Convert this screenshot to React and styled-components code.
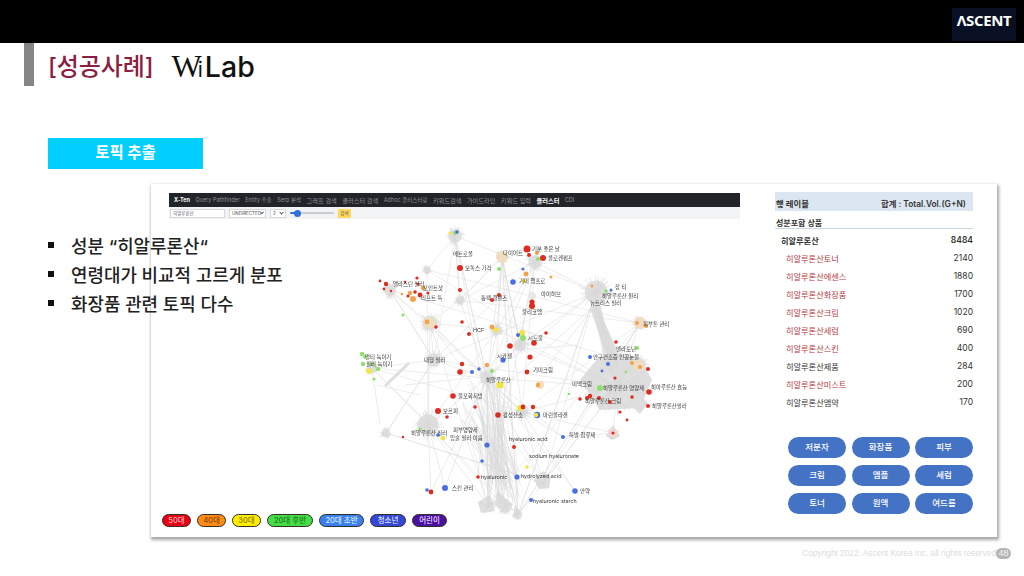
import React from 'react';
import styled, { createGlobalStyle } from 'styled-components';

const GlobalStyle = createGlobalStyle`
  html, body { margin: 0; padding: 0; background: #fff; }
  body { font-family: "Inter", "Noto Sans CJK KR", sans-serif; }
`;

const KR = `"Inter", "Noto Sans CJK KR", sans-serif`;

const Page = styled.div`
  position: relative;
  width: 1024px;
  height: 576px;
  overflow: hidden;
  background: #fff;
`;

const TopBar = styled.header`
  height: 43px;
  background: #000;
  display: flex;
  justify-content: flex-end;
  padding: 8px 8px 2px 0;
  box-sizing: border-box;
`;

const Logo = styled.div`
  width: 64px;
  background: #0a1024;
  color: #fff;
  font: 700 15px "Open Sans", "Liberation Sans", sans-serif;
  letter-spacing: -0.4px;
  display: flex;
  align-items: center;
  justify-content: center;
  padding-bottom: 9px;
  box-sizing: border-box;
`;

const TitleRow = styled.div`
  height: 43px;
  display: flex;
  padding-left: 24px;
`;

const TitleMark = styled.div`
  width: 10px;
  background: #858585;
`;

const Title = styled.h1`
  margin: 0 0 0 14px;
  font: 500 24px/47px ${KR};
  color: #8b1e41;
  letter-spacing: -0.1px;
  height: 46px;
`;

const WiLab = styled.div`
  margin-left: 18px;
  padding-top: 5px;
  display: flex;
  align-items: baseline;
  color: #111;
  height: 38px;
`;

const WiMark = styled.span`
  font: 400 32px "Liberation Serif", serif;
  letter-spacing: -4px;
`;

const WiDot = styled.span`
  font: 400 21px "Inter", sans-serif;
  margin-right: 2px;
`;

const LabText = styled.span`
  font: 500 28.5px "Inter", sans-serif;
  letter-spacing: 0.1px;
`;

const Badge = styled.div`
  margin: 52px 0 0 48px;
  width: 155px;
  height: 31px;
  background: #00cfff;
  color: #fff;
  font: 700 15.5px/30px ${KR};
  text-align: center;
`;

const Panel = styled.section`
  margin: 15px 0 0 151px;
  width: 846px;
  height: 353px;
  background: #fff;
  display: flex;
  box-shadow: 1px 2px 3px 1px rgba(0, 0, 0, 0.35);
`;

const LeftCol = styled.div`
  width: 609px;
  padding: 9px 0 10px 18px;
  box-sizing: border-box;
  display: flex;
  flex-direction: column;
`;

const Nav = styled.nav`
  width: 571px;
  height: 14px;
  background: #212529;
  display: flex;
  align-items: center;
  gap: 5.5px;
  padding-left: 5px;
  box-sizing: border-box;
  white-space: nowrap;
`;

const NavItem = styled.span`
  color: ${p => (p.$on ? '#fff' : '#8d9094')};
  font: ${p => (p.$on ? 700 : 400)} ${p => (p.$wide ? 6.2 : 5.5)}px ${KR};
`;

const FormRow = styled.div`
  width: 571px;
  height: 12px;
  background: #f1f3f5;
  display: flex;
  align-items: center;
  gap: 4px;
  padding-left: 1px;
  box-sizing: border-box;
  font: 400 4.5px ${KR};
  color: #555;
`;

const Field = styled.div`
  width: ${p => p.$w}px;
  height: 9px;
  background: #fff;
  border: 0.5px solid #d5d8dc;
  box-sizing: border-box;
  padding: 0 2px;
  display: flex;
  align-items: center;
  justify-content: space-between;
  white-space: nowrap;
  &::after {
    content: ${p => (p.$select ? "''" : 'none')};
    width: 2px;
    height: 2px;
    border-right: 0.5px solid #555;
    border-bottom: 0.5px solid #555;
    transform: rotate(45deg);
    margin-bottom: 1px;
  }
`;

const Range = styled.input`
  appearance: none;
  width: 44px;
  height: 8px;
  margin: 0;
  background: transparent;
  &::-webkit-slider-runnable-track {
    height: 2px;
    border-radius: 1px;
    background: linear-gradient(to right, #2f6fe0 18%, #c9ccd0 18%);
  }
  &::-webkit-slider-thumb {
    appearance: none;
    width: 7px;
    height: 7px;
    margin-top: -2.5px;
    border-radius: 50%;
    background: #2f6fe0;
  }
`;

const GoButton = styled.div`
  width: 13px;
  height: 9px;
  line-height: 9px;
  background: #ffd95c;
  text-align: center;
  font-size: 4.5px;
`;

const GraphSvg = styled.svg`
  display: block;
  width: 591px;
  height: 295px;
  margin-left: -18px;
  flex: none;
  overflow: visible;
  filter: blur(0.3px);
`;

const NodeLabel = styled.text`
  font: 400 5.4px ${KR};
  fill: #3a3a3a;
`;

const Legend = styled.div`
  display: flex;
  gap: 6px;
  margin: 0 0 0 -7px;
  height: 13px;
  position: relative;
`;

const Pill = styled.div`
  width: ${p => p.$w}px;
  height: 13px;
  border-radius: 7px;
  background: ${p => p.$bg};
  color: ${p => p.$fg};
  border: 1px solid #33302a;
  box-sizing: border-box;
  text-align: center;
  font: 500 7.5px/11px ${KR};
  white-space: nowrap;
`;

const RightCol = styled.aside`
  width: 198px;
  margin-left: 15px;
  padding-top: 8px;
`;

const TableHead = styled.div`
  height: 18px;
  background: #dce6f1;
  display: flex;
  justify-content: space-between;
  align-items: flex-end;
  padding: 0 7px 1px 1px;
  font: 600 8.4px/12px ${KR};
  color: #333;
`;

const SubHead = styled.div`
  height: 17px;
  border-bottom: 1px solid #c9d6e6;
  font: 600 8px/24px ${KR};
  color: #333;
  padding-left: 1px;
  margin-bottom: 2px;
`;

const TableRow = styled.div`
  height: 18px;
  display: flex;
  justify-content: space-between;
  align-items: center;
  padding-left: ${p => (p.$top ? 6 : 11)}px;
  font: ${p => (p.$top ? 600 : 400)} 8.5px ${KR};
  color: #333;
`;

const RowName = styled.span`
  color: ${p => (p.$hit ? '#b5393f' : '#333')};
  font-size: 8.2px;
`;

const Buttons = styled.div`
  display: grid;
  grid-template-columns: repeat(3, 58px);
  gap: 7px 5.5px;
  margin: 26px 0 0 13px;
`;

const Chip = styled.div`
  height: 21px;
  border-radius: 11px;
  background: #4472c4;
  color: #fff;
  font: 500 8.5px/21px ${KR};
  text-align: center;
`;

const Footer = styled.footer`
  display: flex;
  justify-content: flex-end;
  align-items: center;
  margin-top: 10px;
  padding-right: 13px;
  font: 400 8.3px/12px "Liberation Sans", sans-serif;
  color: #dcdcdc;
`;

const PageNo = styled.span`
  display: inline-block;
  width: 15px;
  height: 11px;
  border-radius: 6px;
  background: #b5b5b5;
  color: #f4f4f4;
  font-size: 9px;
  line-height: 11px;
  text-align: center;
`;

const Bullets = styled.ul`
  position: absolute;
  left: 48px;
  top: 230px;
  margin: 0;
  padding: 0;
  list-style: none;
`;

const Bullet = styled.li`
  display: flex;
  align-items: center;
  height: 29px;
  font: 500 17.9px ${KR};
  color: #222;
  white-space: nowrap;
  &::before {
    content: '';
    width: 6px;
    height: 6px;
    background: #111;
    margin-right: 17px;
  }
`;

// graph data, in page coordinates
const RED = '#e02b20', ORG = '#f2a24a', YEL = '#f4e53c', GRN = '#8fe06a', BLU = '#4a6fe0';

const hubs = [
  [455, 236, 9], [502, 257, 7], [535, 262, 9], [596, 292, 15], [640, 323, 8], [430, 323, 10],
  [390, 290, 8], [428, 425, 14], [386, 433, 6], [372, 368, 7], [487, 378, 9], [617, 387, 24],
  [488, 505, 8], [505, 507, 8], [518, 515, 5], [543, 483, 7], [613, 433, 6], [522, 412, 8],
  [497, 330, 7], [520, 345, 8], [434, 360, 9], [638, 365, 10], [460, 300, 6], [427, 270, 5],
];

const links = [
  [10, 3], [10, 0], [10, 1], [10, 2], [10, 5], [10, 7], [10, 9], [10, 11], [10, 12], [10, 13], [10, 14], [10, 15],
  [10, 17], [10, 18], [10, 19], [10, 20], [10, 22], [7, 9], [7, 5], [7, 12], [2, 3], [2, 18], [1, 18], [0, 22],
  [3, 11], [4, 11], [11, 16], [11, 17], [11, 19], [17, 15], [6, 5], [6, 20], [20, 5], [9, 20], [22, 5], [1, 19],
  [2, 19], [18, 5], [0, 3], [3, 19], [16, 17], [21, 11], [15, 11], [7, 13], [5, 12],
];

const leafLinks = [
  [487, 378, 431, 492], [487, 378, 445, 488], [428, 425, 431, 492], [428, 425, 445, 488], [487, 378, 575, 491],
  [522, 412, 575, 491], [372, 368, 425, 420], [372, 368, 380, 425], [500, 385, 563, 437], [522, 412, 563, 437],
  [617, 433, 563, 437], [487, 378, 478, 477], [487, 378, 517, 477], [515, 350, 578, 345], [595, 305, 545, 370],
  [595, 305, 500, 390], [377, 385, 420, 395], [405, 385, 470, 378],
];

// wedge shaped fans of the leaf nodes
const wedges = [
  '490,495 478,502 481,513 495,511',
  '497,490 495,505 505,514 513,505',
  '515,505 513,517 518,520 522,513',
  '534,480 543,471 551,477 549,488 539,489',
  '613,425 606,436 612,440 620,436',
  '640,395 630,405 640,414 648,403',
  '598,358 580,380 600,410 640,408 652,380 640,358 615,352',
  '596,304 590,308 608,360 622,360',
  '408,362 384,385 386,387 410,364',
];

// pale rings behind some of the hubs
const halos = [
  [502, 257, 6, '#f0dcc0'], [640, 323, 6, '#f0dcc0'], [430, 323, 6, '#f0dcc0'], [638, 365, 6, '#f0dcc0'],
  [540, 385, 4, '#f5dcc0'], [532, 296, 4, '#e8e8e8'], [613, 433, 4, '#f3d5d5'],
];

const dots = [
  [527, 249, 3.5, RED], [529, 255, 2, RED], [543, 258, 3, RED], [538, 259, 2, GRN], [537, 253, 2, ORG],
  [460, 268, 3, RED], [499, 269, 2, GRN], [523, 269, 1.6, BLU], [526, 274, 2.4, ORG], [551, 277, 1.5, ORG],
  [513, 282, 2.8, BLU], [524, 281, 2, YEL], [532, 302, 2.6, RED], [532, 306, 3, RED], [499, 295, 2, RED],
  [492, 300, 2, RED], [460, 290, 2, RED], [462, 322, 1.8, RED], [469, 334, 2, RED], [492, 327, 2.4, ORG],
  [496, 330, 2.4, YEL], [522, 333, 3, YEL], [518, 335, 2, BLU], [523, 338, 3, GRN], [546, 333, 1.8, RED],
  [534, 343, 2.8, RED], [510, 346, 2.8, RED], [616, 342, 1.8, RED], [637, 348, 2, GRN], [637, 323, 2, ORG],
  [646, 326, 2, ORG], [592, 286, 1.5, ORG], [611, 290, 1.5, BLU], [606, 291, 1.8, GRN], [455, 233, 2, GRN],
  [457, 232, 1.8, BLU], [450, 233, 1.6, YEL], [386, 284, 2.2, RED], [417, 278, 1.6, RED], [410, 293, 2.2, ORG],
  [420, 295, 2.4, RED], [413, 299, 3, ORG], [423, 288, 2.2, ORG], [415, 292, 1.8, RED], [403, 315, 1.6, GRN],
  [436, 327, 1.8, RED], [427, 322, 2.4, ORG], [380, 281, 1.4, RED], [391, 291, 1.2, RED], [405, 282, 1.3, RED],
  [408, 296, 1.6, RED], [418, 284, 1.6, RED], [402, 294, 1.3, ORG], [428, 293, 1.6, RED], [384, 289, 1.4, RED],
  [362, 354, 2.2, GRN], [365, 357, 2, GRN], [363, 364, 2.2, GRN], [372, 364, 2, GRN], [369, 371, 2.8, YEL],
  [378, 369, 2.2, GRN], [374, 379, 1.6, GRN], [438, 411, 3, RED], [447, 417, 1.8, RED], [403, 437, 1.2, RED],
  [427, 490, 1.8, BLU], [431, 492, 2.4, RED], [445, 488, 3, BLU], [443, 438, 2.2, YEL], [438, 435, 1.8, BLU],
  [420, 429, 1.6, GRN], [503, 360, 2.6, BLU], [530, 357, 2.6, RED], [462, 364, 2.2, RED], [460, 372, 2.8, RED],
  [472, 372, 2, BLU], [479, 369, 1.8, BLU], [487, 365, 2.2, ORG], [492, 371, 2, GRN], [527, 372, 2.4, RED],
  [500, 385, 3.6, YEL], [453, 396, 2.8, RED], [475, 407, 1.8, RED], [498, 415, 2.8, RED], [520, 408, 3, YEL],
  [523, 407, 2.4, RED], [533, 407, 2.2, RED], [537, 415, 3.2, BLU], [536, 415, 2.2, YEL], [538, 385, 2.2, ORG],
  [600, 388, 3, GRN], [590, 396, 2.2, RED], [587, 398, 2, RED], [580, 399, 1.8, RED], [599, 398, 2, RED],
  [649, 392, 2.8, RED], [648, 406, 2, RED], [632, 397, 1.8, RED], [613, 433, 1.6, RED], [590, 357, 2, BLU],
  [608, 364, 2, BLU], [632, 363, 2, ORG], [648, 369, 2, RED], [602, 371, 1.4, BLU], [627, 420, 1.4, RED],
  [610, 402, 2, RED], [620, 412, 1.6, RED], [615, 378, 1.6, RED], [487, 445, 2.6, BLU], [482, 461, 1.8, BLU],
  [514, 447, 2, RED], [563, 437, 2, BLU], [478, 477, 1.8, RED], [517, 477, 2.6, BLU], [527, 467, 1.8, YEL],
  [531, 500, 2, BLU], [575, 491, 2.8, BLU], [569, 394, 1.2, GRN], [640, 367, 2, ORG], [626, 372, 1.4, GRN],
];

const labels = [
  [532, 251, '기분 좋은 날'], [548, 260, '콜로겐펌프'], [503, 255, '다이어트'], [453, 256, '메트로폴'], [465, 270, '보톡스 가격'],
  [519, 283, '기미 앰프로'], [541, 296, '아이허브'], [481, 300, '통팩 클렌즈'], [522, 314, '물리코엠'], [473, 332, 'HCF'],
  [528, 340, '시드물'], [615, 289, '잡 티'], [602, 298, '히알루론산 원리'], [590, 305, '뉴트리스 필러'], [643, 326, '피부톤 관리'],
  [393, 286, '엘라스틴 필러'], [423, 290, '포인트샷'], [421, 300, '리프트 특'], [365, 359, '멀티 녹이기'], [366, 366, '필러 녹이기'],
  [424, 362, '대형 필러'], [411, 435, '히알루론산 필러'], [443, 413, '보르피'], [497, 358, '시카젤'], [533, 372, '기미크림'],
  [486, 382, '히알루론산'], [572, 386, '미백크림'], [603, 390, '히알루론산 영양제'], [593, 359, '안구건조증 인공눈물'], [651, 389, '히아루론산 효능'],
  [652, 408, '히알루론산필러'], [585, 403, '히알루론산 크림'], [503, 417, '활성산소'], [543, 417, '마린콜라겐'], [569, 437, '특발 접류제'],
  [453, 432, '피부영양제'], [450, 440, '입술 필러 이름'], [509, 441, 'hyaluronic acid'], [529, 458, 'sodium hyaluronate'],
  [481, 479, 'hyaluronic'], [521, 478, 'hydrolyzed acid'], [452, 490, '스킨 관리'], [580, 493, '안약'], [533, 503, 'hyaluronic starch'],
  [458, 398, '불포화지방'], [616, 351, '멜라토닌'],
];

// small seeded random, so the graph is the same on every run
function makeRandom(seed) {
  let s = seed;
  return () => {
    s = (s * 16807) % 2147483647;
    return s / 2147483647;
  };
}

function buildSpokes() {
  const rnd = makeRandom(4711);
  const out = [];
  hubs.forEach(([x, y, r]) => {
    const n = Math.round(r * 5);
    for (let i = 0; i < n; i++) {
      const a = rnd() * Math.PI * 2;
      const l = r * (0.7 + rnd() * 0.5);
      out.push([x, y, x + Math.cos(a) * l, y + Math.sin(a) * l]);
    }
  });
  // the dense bundle that runs from the centre down to the bottom fans
  for (let i = 0; i < 70; i++) {
    const x1 = 462 + rnd() * 44;
    const y1 = 380 + rnd() * 60;
    out.push([x1, y1, 486 + rnd() * 36, 470 + rnd() * 35]);
  }
  // the bundle under the large hub at the top right
  for (let i = 0; i < 20; i++) {
    out.push([592 + rnd() * 8, 302, 604 + rnd() * 14, 360 + rnd() * 14]);
  }
  // long lines across the graph
  for (let i = 0; i < 50; i++) {
    const a = hubs[Math.floor(rnd() * 12)];
    const b = hubs[12 + Math.floor(rnd() * 12)];
    out.push([a[0], a[1], b[0], b[1]]);
  }
  return out;
}

const spokes = buildSpokes();

function Graph() {
  return (
    <GraphSvg viewBox="151 219 591 295">
      <g stroke="#dfdfdf" strokeWidth="0.6">
        {links.map(([a, b], i) => (
          <line key={i} x1={hubs[a][0]} y1={hubs[a][1]} x2={hubs[b][0]} y2={hubs[b][1]} />
        ))}
        {leafLinks.map(([x1, y1, x2, y2], i) => (
          <line key={i} x1={x1} y1={y1} x2={x2} y2={y2} />
        ))}
      </g>
      <g fill="#dedede">
        {wedges.map(p => <polygon key={p} points={p} />)}
      </g>
      <g fill="#e2e2e2">
        {hubs.map(([x, y, r], i) => (
          <circle key={i} cx={x} cy={y} r={r * 0.75} />
        ))}
      </g>
      <g stroke="#d8d8d8" strokeWidth="0.45">
        {spokes.map(([x1, y1, x2, y2], i) => (
          <line key={i} x1={x1} y1={y1} x2={x2} y2={y2} />
        ))}
      </g>
      {halos.map(([x, y, r, c], i) => (
        <circle key={i} cx={x} cy={y} r={r} fill={c} />
      ))}
      {dots.map(([x, y, r, c], i) => (
        <circle key={i} cx={x} cy={y} r={r} fill={c} />
      ))}
      {labels.map(([x, y, t], i) => (
        <NodeLabel key={i} x={x} y={y}>{t}</NodeLabel>
      ))}
    </GraphSvg>
  );
}

const navItems = [
  ['Query Pathfinder'], ['Entity 추출'], ['Serp 분석'], ['그래프 검색', true], ['클러스터 검색', true],
  ['Adhoc 클러스터링'], ['키워드검색', true], ['가이드라인', true], ['키워드 입력', true],
];

const legend = [
  ['50대', 29, '#e60012', '#f5b5b5'],
  ['40대', 29, '#ff8a14', '#8a4a10'],
  ['30대', 29, '#ffee00', '#8a8000'],
  ['20대 후반', 46, '#45dc45', '#1f7a1f'],
  ['20대 초반', 45, '#3a80ee', '#d8e8ff'],
  ['청소년', 36, '#3347d8', '#dfe3ff'],
  ['어린이', 35, '#4a10a0', '#e6dcff'],
];

const rows = [
  ['히알루론산토너', '2140', true],
  ['히알루론산에센스', '1880', true],
  ['히알루론산화장품', '1700', true],
  ['히알루론산크림', '1020', true],
  ['히알루론산세럼', '690', true],
  ['히알루론산스킨', '400', true],
  ['히알루론산제품', '284', false],
  ['히알루론산미스트', '200', true],
  ['히알루론산앰약', '170', false],
];

const chips = ['저분자', '화장품', '피부', '크림', '앰플', '세럼', '토너', '원액', '여드름'];

export default function App() {
  return (
    <Page>
      <GlobalStyle />
      <TopBar>
        <Logo>ΛSCENT</Logo>
      </TopBar>
      <TitleRow>
        <TitleMark />
        <Title>[성공사례]</Title>
        <WiLab>
          <WiMark>W</WiMark>
          <WiDot>i</WiDot>
          <LabText>Lab</LabText>
        </WiLab>
      </TitleRow>
      <Badge>토픽 추출</Badge>
      <Panel>
        <LeftCol>
          <Nav>
            <NavItem $on>X-Ten</NavItem>
            {navItems.map(([n, wide]) => <NavItem key={n} $wide={wide}>{n}</NavItem>)}
            <NavItem $on $wide>클러스터</NavItem>
            <NavItem>CDI</NavItem>
          </Nav>
          <FormRow>
            <Field $w={55}>히알루론산</Field>
            <Field $w={37} $select>UNDIRECTED</Field>
            <Field $w={16} $select>2</Field>
            <Range type="range" min="0" max="10" defaultValue="1" readOnly />
            <GoButton>검색</GoButton>
          </FormRow>
          <Graph />
          <Legend>
            {legend.map(([t, w, bg, fg]) => <Pill key={t} $w={w} $bg={bg} $fg={fg}>{t}</Pill>)}
          </Legend>
        </LeftCol>
        <RightCol>
          <TableHead>
            <span>행 레이블</span>
            <span>합계 : Total.Vol.(G+N)</span>
          </TableHead>
          <SubHead>성분포함 상품</SubHead>
          <TableRow $top>
            <RowName>히알루론산</RowName>
            <span>8484</span>
          </TableRow>
          {rows.map(([name, value, hit]) => (
            <TableRow key={name}>
              <RowName $hit={hit}>{name}</RowName>
              <span>{value}</span>
            </TableRow>
          ))}
          <Buttons>
            {chips.map(c => <Chip key={c}>{c}</Chip>)}
          </Buttons>
        </RightCol>
      </Panel>
      <Footer>
        <span>Copyright 2022. Ascent Korea Inc. all rights reserved</span>
        <PageNo>48</PageNo>
      </Footer>
      <Bullets>
        <Bullet>성분 “히알루론산“</Bullet>
        <Bullet>연령대가 비교적 고르게 분포</Bullet>
        <Bullet>화장품 관련 토픽 다수</Bullet>
      </Bullets>
    </Page>
  );
}
